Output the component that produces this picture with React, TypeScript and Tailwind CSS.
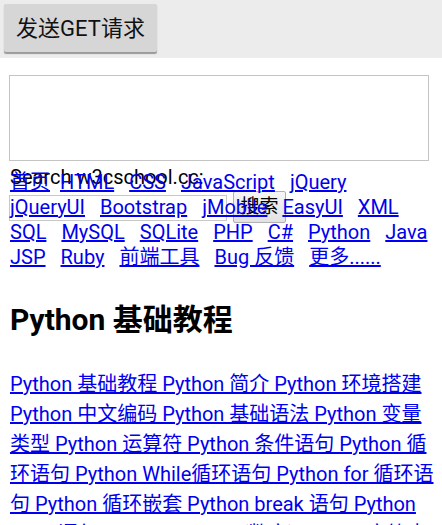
const FONT = "font-['Roboto','Noto_Sans_CJK_SC',sans-serif]";

const NAV_ROWS = [
  ['首页', 'HTML', 'CSS', 'JavaScript', 'jQuery'],
  ['jQueryUI', 'Bootstrap', 'jMobile', 'EasyUI', 'XML'],
  ['SQL', 'MySQL', 'SQLite', 'PHP', 'C#', 'Python', 'Java'],
  ['JSP', 'Ruby', '前端工具', 'Bug 反馈', '更多......'],
];

// the tutorial index wraps like this in the webview
const TUTORIAL_LINES = [
  'Python 基础教程 Python 简介 Python 环境搭建',
  'Python 中文编码 Python 基础语法 Python 变量',
  '类型 Python 运算符 Python 条件语句 Python 循',
  '环语句 Python While循环语句 Python for 循环语',
  '句 Python 循环嵌套 Python break 语句 Python',
  'pass 语句 Python Number(数字) Python 字符串',
];

export default function App() {
  return (
    <div className={`${FONT} h-[525px] w-[442px] overflow-hidden bg-white`}>
      <div className="h-[58px] bg-[#ececec] pl-[4px] pt-[4px]">
        <button className="h-[48px] w-[153px] rounded-[2px] bg-[#d6d6d6] text-[22px] text-[#111] shadow-[0_1.5px_1px_#9a9a9a]">
          发送GET请求
        </button>
      </div>

      <div className="px-[9px] pt-[17px]">
        <div className="h-[86px] w-[420px] border border-[#c4c4c4] bg-white" />
      </div>

      <div className="px-[10px]">
        <div className="relative mt-[9px]">
          {/* search form, rendered underneath the nav links */}
          <div className="absolute left-0 top-[-5px] text-[20px] leading-[24px] text-black">Search w3cschool.cc:</div>
          <div className="absolute left-[-1px] top-[25px] h-[26px] w-[218px] border border-[#c8c8c8]" />
          <div className="absolute left-[223px] top-[21px] flex h-[32px] w-[53px] items-center justify-center rounded-[2px] border border-[#b0b0b0] bg-gradient-to-b from-[#f6f6f6] to-[#e2e2e2] text-[19px] text-black">
            搜索
          </div>

          <div className="relative">
            {NAV_ROWS.map((row, i) => (
              <div key={i} className="flex h-[25px] gap-x-[15px] whitespace-nowrap text-[20px] leading-[25px]">
                {row.map((label) => (
                  <a
                    key={label}
                    href="#"
                    className={`text-[#0000ee] underline ${label === '首页' ? '-mr-[5px]' : ''}`}
                  >
                    {label}
                  </a>
                ))}
              </div>
            ))}
          </div>
        </div>

        <h1 className="mt-[32px] h-[36px] text-[30px] font-bold leading-[36px] text-black">Python 基础教程</h1>

        <div className="mt-[31px] text-[20px] leading-[30px]">
          {TUTORIAL_LINES.map((line) => (
            <div key={line} className="whitespace-nowrap">
              <a href="#" className="text-[#0000ee] underline">
                {line}
              </a>
            </div>
          ))}
        </div>
      </div>
    </div>
  );
}
